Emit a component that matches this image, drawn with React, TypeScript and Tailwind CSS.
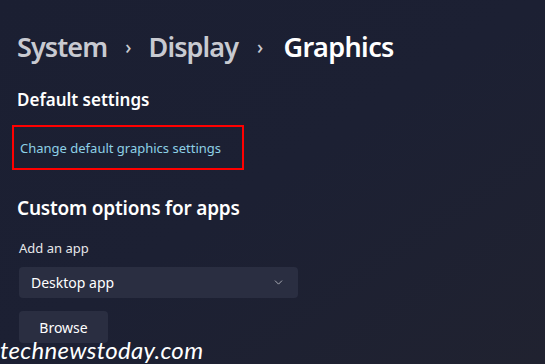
import { ChevronDown } from "lucide-react";

export default function App() {
    return (
        <main className="w-[545px] h-[364px] overflow-hidden bg-gradient-to-br from-[#1b1f32] via-[#1c2033] to-[#202230] font-['Noto_Sans',sans-serif] relative">
            <div className="pl-[17px] pt-[27px]">
                <h1 className="flex items-center text-[27px] font-semibold leading-[40px] tracking-[-0.9px]">
                    <span className="text-[#c8cad1]">System</span>
                    <span className="text-[#c8cad1] text-[19px] mx-[18px] font-medium">›</span>
                    <span className="text-[#c8cad1]">Display</span>
                    <span className="text-[#c8cad1] text-[19px] ml-[19px] mr-[21px] font-medium">›</span>
                    <span className="text-white tracking-[-0.6px]">Graphics</span>
                </h1>

                <h2 className="mt-[21px] text-white text-[17px] font-semibold leading-[24px]">Default settings</h2>

                <div className="mt-[13px] -ml-[5px] w-[232px] h-[45px] border-2 border-[#ff0000] flex items-center pl-[6px]">
                    <a href="#" className="text-[#8ed0e6] text-[13px] leading-[18px]">Change default graphics settings</a>
                </div>

                <h2 className="mt-[25px] text-white text-[19px] font-semibold leading-[26px] tracking-[-0.2px]">Custom options for apps</h2>

                <p className="mt-[18px] ml-[2px] text-[#e6e7ea] text-[13px] leading-[18px]">Add an app</p>

                <div className="mt-[10px] ml-[2px] w-[279px] h-[31px] rounded-[4px] bg-[#2a2e41] flex items-center justify-between pl-[12px] pr-[13px]">
                    <span className="text-white text-[14px]">Desktop app</span>
                    <ChevronDown size={13} strokeWidth={1.5} className="text-[#c4c6cd]" />
                </div>

                <button className="mt-[13px] ml-[2px] w-[89px] h-[32px] rounded-[4px] bg-[#2a2e41] text-white text-[14px] flex items-center justify-center">
                    Browse
                </button>
            </div>

            <div className="absolute left-0 top-[336px] text-white text-[24px] italic font-['Lato',sans-serif] leading-[28px] tracking-[0.3px]">
                technewstoday.com
            </div>
        </main>
    )
}
